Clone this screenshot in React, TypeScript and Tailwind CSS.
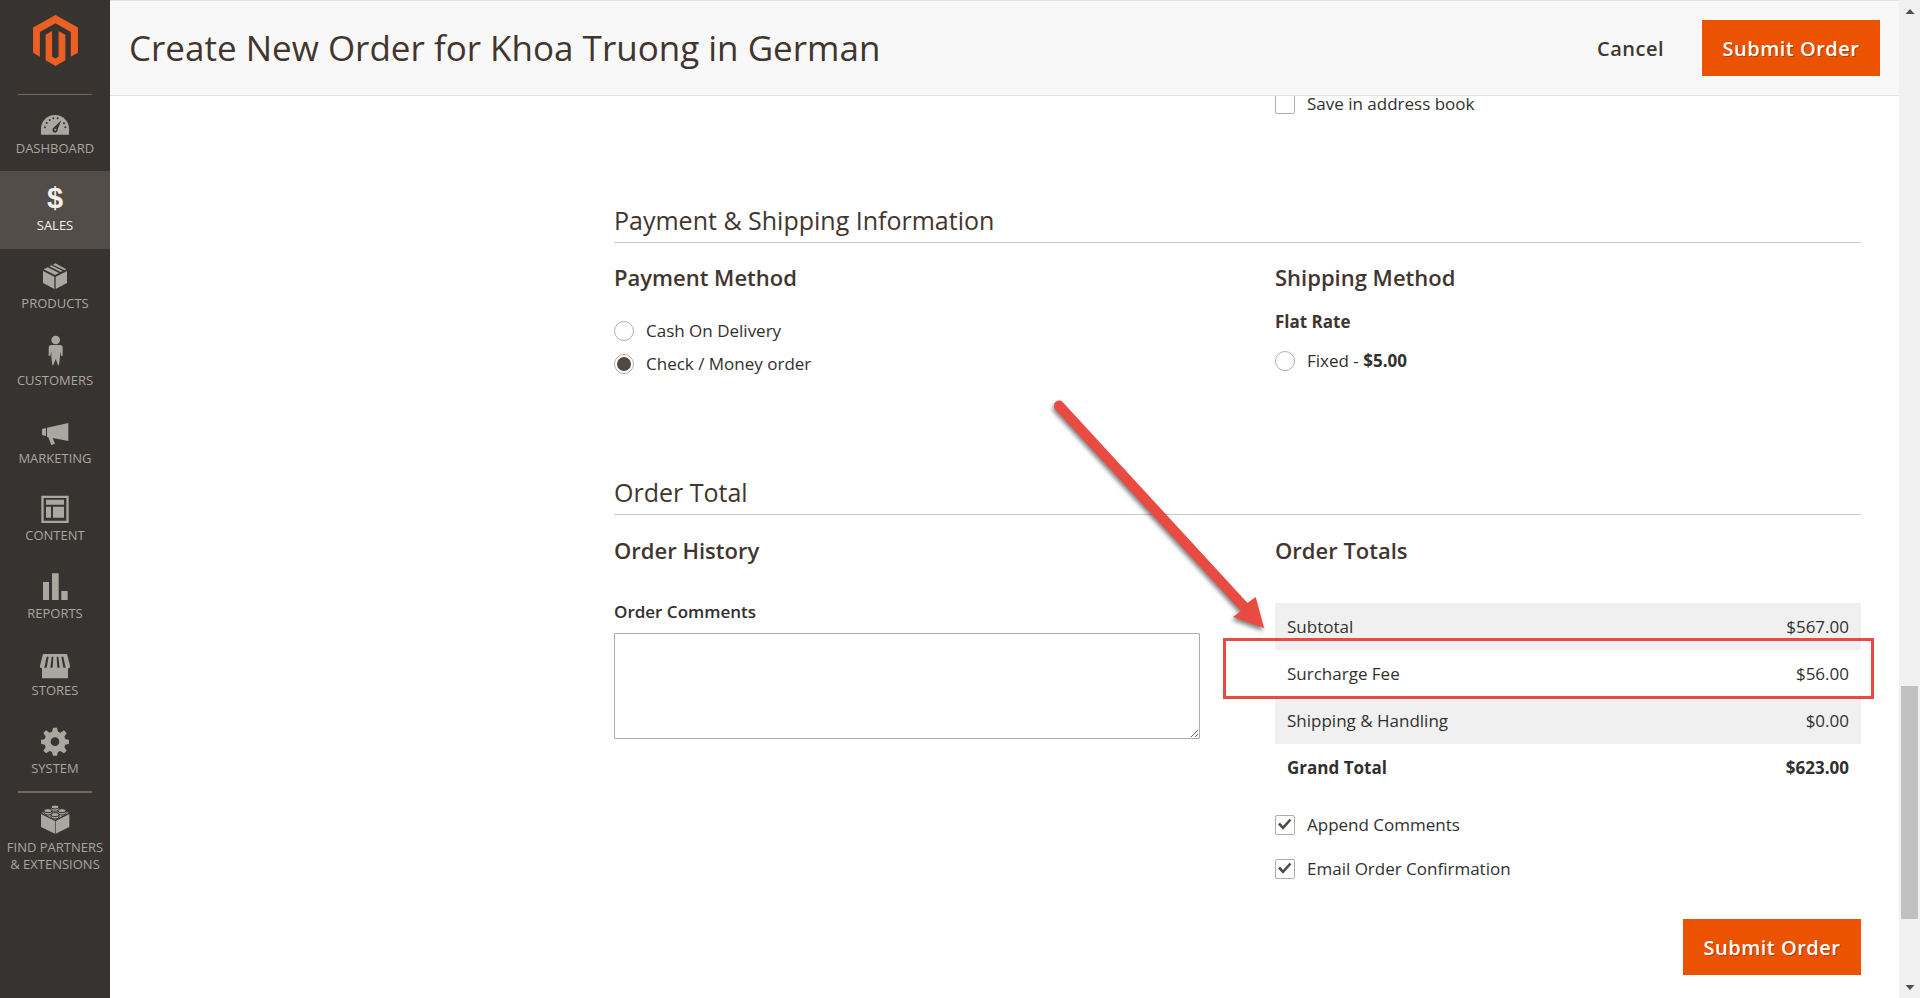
import type { ReactNode } from "react";

function Icon({ children }: { children: ReactNode }) {
  return (
    <svg viewBox="0 0 90 96" className="h-8 w-[30px] shrink-0 overflow-visible fill-current" aria-hidden="true">
      {children}
    </svg>
  );
}

const BG = "#373330";

const menu: { label: string; icon: ReactNode; active?: boolean }[] = [
  {
    label: "Dashboard",
    icon: (
      <Icon>
        <path d="M3 86V68a42 41 0 0 1 84 0v18z" />
        <g fill={BG}>
          <circle cx="15" cy="64" r="3" />
          <circle cx="20" cy="51" r="3" />
          <circle cx="29" cy="42" r="3" />
          <circle cx="40" cy="37" r="3" />
          <circle cx="53" cy="37" r="3" />
          <circle cx="72" cy="52" r="3" />
          <circle cx="76" cy="64" r="3" />
          <path d="M64 43L53 70a8 8 0 1 1-14-3z" />
        </g>
        <circle cx="46" cy="71" r="3" />
      </Icon>
    ),
  },
  {
    label: "Sales",
    active: true,
    icon: (
      <span className="h-8 font-['Liberation_Sans',sans-serif] text-[29px] leading-[30px] font-bold text-[#f7f3eb]" aria-hidden="true">
        $
      </span>
    ),
  },
  {
    label: "Products",
    icon: (
      <Icon>
        <path d="M9 30l34 17v37L9 66zM81 30L47 47v37l34-18z" />
        <path d="M11 25l12-6 34 17-12 6zM28 16l6-3 34 17-6 3zM39 11l7-4 33 18-6 3z" />
      </Icon>
    ),
  },
  {
    label: "Customers",
    icon: (
      <Icon>
        <circle cx="47" cy="6" r="13" />
        <path d="M34 21h26q8 0 8 9v23l-5 1-3-14v16l-3 26h-3l-7-19-7 19h-3l-3-26V40l-3 14-5-1V30q0-9 8-9z" />
      </Icon>
    ),
  },
  {
    label: "Marketing",
    icon: (
      <Icon>
        <path d="M6 39l12-3v24L6 57zM21 35l64-14v54l-47-9 7 17-11 4-9-23-4-1z" />
      </Icon>
    ),
  },
  {
    label: "Content",
    icon: (
      <Icon>
        <path fillRule="evenodd" d="M4 8h82v82H4zm7 7v68h68V15z" />
        <path d="M18 20h54v15H18zM18 41h15v33H18zM39 41h33v33H39z" />
      </Icon>
    ),
  },
  {
    label: "Reports",
    icon: (
      <Icon>
        <path d="M9 33h18v54H9zM36 7h20v80H36zM64 60h19v27H64z" />
      </Icon>
    ),
  },
  {
    label: "Stores",
    icon: (
      <Icon>
        <path d="M9 18h72l9 35v5q-2 3-6 3v30H6V61q-4 0-6-3v-5z" />
        <g fill={BG}>
          <path d="M20 26h6l-6 33h-7zM35 26h5l-2 33h-7zM50 26h5l4 33h-7zM64 26h6l7 33h-7z" />
        </g>
      </Icon>
    ),
  },
  {
    label: "System",
    icon: (
      <Icon>
        <path
          fillRule="evenodd"
          d="M39 5h12l3 12 7 3 11-7 8 8-7 11 3 7 11 3v11l-11 3-3 7 7 11-8 8-11-7-7 3-3 11H39l-3-11-7-3-11 7-8-8 7-11-3-7-11-3V42l11-3 3-7-7-11 8-8 11 7 7-3zm6 29a13 13 0 1 0 0 26 13 13 0 0 0 0-26z"
        />
      </Icon>
    ),
  },
];

function MenuLink({ label, icon, active }: { label: ReactNode; icon: ReactNode; active?: boolean }) {
  return (
    <a
      href="#"
      className={
        active
          ? "flex h-full flex-col items-center gap-0.5 bg-[#524d49] pt-3 text-center text-[13px] leading-[17px] text-[#f7f3eb] uppercase"
          : "flex h-full flex-col items-center gap-0.5 pt-3 text-center text-[13px] leading-[17px] text-[#aaa6a0] uppercase"
      }
    >
      {icon}
      <span>{label}</span>
    </a>
  );
}

function Sidebar() {
  return (
    <nav className="w-[110px] shrink-0 bg-[#373330]">
      <a href="#" aria-label="Home" className="flex h-[94px] justify-center pt-[15px]">
        <svg viewBox="99 47 132 150" className="h-[51px] w-[45px] fill-[#eb5f25]" aria-hidden="true">
          <path d="M165 47l66 37v74l-21 12V97l-45-26-46 26v73l-20-12V84z" />
          <path d="M136 105l19-11v75l10 6 9-6V94l20 11v75l-29 17-29-17z" />
        </svg>
      </a>
      <div className="mx-[18px] h-px bg-[#736963]" />
      <ul className="-mt-px grid h-[697px] auto-rows-fr">
        {menu.map((m) => (
          <li key={m.label}>
            <MenuLink {...m} />
          </li>
        ))}
      </ul>
      <div className="mx-[18px] h-0.5 bg-[#736963]" />
      <div>
        <MenuLink
          label={
            <>
              Find Partners
              <br />
              &amp; Extensions
            </>
          }
          icon={
            <Icon>
              <path d="M3 27l42 21v38L3 66zM88 27L47 48v38l41-20z" />
              <path d="M5 23L45 5l41 18-41 21z" />
              <g stroke={BG} strokeWidth="3">
                <path d="M33 6v7a12 6 0 0 0 24 0V6z" />
                <ellipse cx="45" cy="6" rx="12" ry="6" />
                <path d="M12 17v7a12 6 0 0 0 24 0v-7z" />
                <ellipse cx="24" cy="17" rx="12" ry="6" />
                <path d="M54 17v7a12 6 0 0 0 24 0v-7z" />
                <ellipse cx="66" cy="17" rx="12" ry="6" />
                <path d="M33 29v7a12 6 0 0 0 24 0v-7z" />
                <ellipse cx="45" cy="29" rx="12" ry="6" />
              </g>
            </Icon>
          }
        />
      </div>
    </nav>
  );
}

function SubmitButton() {
  return (
    <button
      type="button"
      className="h-14 min-w-[178px] bg-[#eb5202] px-5 pt-px text-[20px] leading-7 font-semibold tracking-wide text-white [text-shadow:1px_1px_0_rgba(0,0,0,0.25)]"
    >
      Submit Order
    </button>
  );
}

function Check({ id, label, checked }: { id: string; label: string; checked?: boolean }) {
  return (
    <div className="flex h-5 items-center gap-3">
      <span className="grid size-5 shrink-0">
        <input
          id={id}
          type="checkbox"
          defaultChecked={checked}
          className="peer col-start-1 row-start-1 size-5 appearance-none rounded-[2px] border border-[#adadad] bg-white"
        />
        <svg
          viewBox="0 0 20 20"
          className="pointer-events-none invisible col-start-1 row-start-1 size-5 fill-none stroke-[#514943] stroke-[2.6] peer-checked:visible"
          aria-hidden="true"
        >
          <path d="M4 8.5l4 4.3 7.500-8.300" />
        </svg>
      </span>
      <label htmlFor={id}>{label}</label>
    </div>
  );
}

function Radio({ id, name, checked, children }: { id: string; name: string; checked?: boolean; children: ReactNode }) {
  return (
    <div className="flex h-5 items-center gap-3">
      <input
        id={id}
        name={name}
        type="radio"
        defaultChecked={checked}
        className="size-5 shrink-0 appearance-none rounded-full border border-[#adadad] bg-white bg-clip-content p-[2px] checked:bg-[#514943]"
      />
      <label htmlFor={id}>{children}</label>
    </div>
  );
}

function SectionTitle({ children }: { children: ReactNode }) {
  return <h2 className="border-b border-[#cacaca] pb-1.5 text-[25px] leading-8 text-[#41362f]">{children}</h2>;
}

function BlockTitle({ children }: { children: ReactNode }) {
  return <h3 className="text-[22px] leading-8 font-semibold text-[#41362f]">{children}</h3>;
}

const totals = [
  { label: "Subtotal", value: "$567.00" },
  { label: "Surcharge Fee", value: "$56.00" },
  { label: "Shipping & Handling", value: "$0.00" },
];

function Totals() {
  return (
    <div className="relative mt-[37px]">
      <table className="w-full border-collapse">
        <tbody>
          {totals.map((t) => (
            <tr key={t.label} className="h-[47px] odd:bg-[#f0f0f0]">
              <th scope="row" className="px-3 text-left font-normal">
                {t.label}
              </th>
              <td className="px-3 text-right">{t.value}</td>
            </tr>
          ))}
          <tr className="h-[47px] font-bold">
            <th scope="row" className="px-3 text-left">
              Grand Total
            </th>
            <td className="px-3 text-right">$623.00</td>
          </tr>
        </tbody>
      </table>
      <div className="pointer-events-none absolute top-[35px] right-[-13px] left-[-52px] h-[61px] border-3 border-[#e94b43]" />
      <svg
        viewBox="0 0 230 250"
        className="pointer-events-none absolute top-[-208px] left-[-225px] h-[250px] w-[230px] fill-[#e94b43] drop-shadow-[-1px_3px_2px_rgba(0,0,0,0.5)]"
        aria-hidden="true"
      >
        <path d="M13 7.500L197.500 208l8.200-6 8.300 31-31-11 8-6L5 14A5 5 0 0 1 13 7.500z" />
      </svg>
    </div>
  );
}

function Scrollbar() {
  return (
    <div className="flex w-[21px] shrink-0 flex-col items-center bg-[#f1f1f1]" aria-hidden="true">
      <svg viewBox="0 0 20 17" className="h-[17px] w-5 fill-[#505050]">
        <path d="M5.500 14l4.500-5 4.500 5z" />
      </svg>
      <div className="grow-[669]" />
      <div className="w-[17px] grow-[233] bg-[#c1c1c1]" />
      <div className="grow-[62]" />
      <svg viewBox="0 0 20 17" className="h-[17px] w-5 fill-[#505050]">
        <path d="M5.500 4l4.500 5 4.500-5z" />
      </svg>
    </div>
  );
}

export default function App() {
  return (
    <div className="flex min-h-screen bg-white font-['Open_Sans',sans-serif] text-[17px] leading-6 text-[#303030]">
      <Sidebar />
      <div className="min-w-0 flex-1">
        <header className="relative z-10 flex h-24 items-center justify-between border-y border-[#e3e3e3] bg-[#f8f8f8] px-[19px]">
          <h1 className="text-[35px] leading-[48px] text-[#41362f]">Create New Order for Khoa Truong in German</h1>
          <div className="flex items-center gap-[38px]">
            <button type="button" className="pt-px text-[20px] leading-7 font-semibold tracking-wide text-[#41362f]">
              Cancel
            </button>
            <SubmitButton />
          </div>
        </header>
        <main className="-mt-0.5 pr-[38px] pb-[22px] pl-[504px]">
          <div className="grid grid-cols-2 gap-[75px]">
            <div className="col-start-2">
              <Check id="save-address" label="Save in address book" />
            </div>
          </div>

          <section className="mt-[90px]">
            <SectionTitle>Payment &amp; Shipping Information</SectionTitle>
            <div className="mt-[18px] grid grid-cols-2 gap-[75px]">
              <div>
                <BlockTitle>Payment Method</BlockTitle>
                <div className="mt-7 flex flex-col gap-[13px]">
                  <Radio id="cod" name="payment">
                    Cash On Delivery
                  </Radio>
                  <Radio id="checkmo" name="payment" checked>
                    Check / Money order
                  </Radio>
                </div>
              </div>
              <div>
                <BlockTitle>Shipping Method</BlockTitle>
                <h4 className="my-[17px] font-bold text-[#41362f]">Flat Rate</h4>
                <Radio id="flatrate" name="shipping">
                  Fixed - <strong>$5.00</strong>
                </Radio>
              </div>
            </div>
          </section>

          <section className="mt-[102px]">
            <SectionTitle>Order Total</SectionTitle>
            <div className="mt-[19px] grid grid-cols-2 gap-[75px]">
              <div>
                <BlockTitle>Order History</BlockTitle>
                <label htmlFor="comments" className="mt-[34px] block font-semibold">
                  Order Comments
                </label>
                <textarea
                  id="comments"
                  className="mt-[9px] block h-[106px] w-full resize rounded-[1px] border border-[#adadad] bg-white px-3 py-2"
                />
              </div>
              <div>
                <BlockTitle>Order Totals</BlockTitle>
                <Totals />
                <div className="mt-6 flex flex-col gap-6">
                  <Check id="append" label="Append Comments" checked />
                  <Check id="email" label="Email Order Confirmation" checked />
                </div>
                <div className="mt-10 flex justify-end">
                  <SubmitButton />
                </div>
              </div>
            </div>
          </section>
        </main>
      </div>
      <Scrollbar />
    </div>
  );
}
